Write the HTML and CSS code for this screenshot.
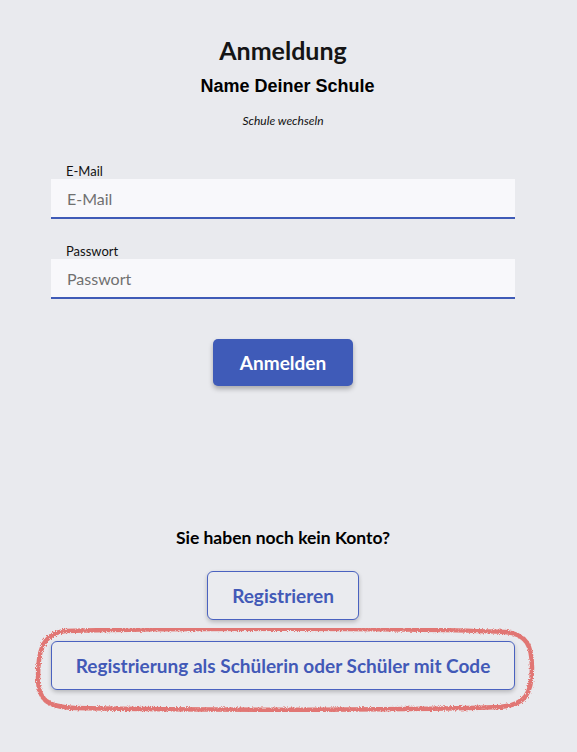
FILE: index.html
```html
<!DOCTYPE html>
<html lang="de">
<head>
<meta charset="utf-8">
<title>Anmeldung</title>
<link rel="stylesheet" href="styles.css">
</head>
<body>
<main class="page">
  <header class="head">
    <h1 class="title">Anmeldung</h1>
    <h2 class="school">Name Deiner Schule</h2>
    <a class="switch" href="#">Schule wechseln</a>
  </header>
  <form class="form">
    <label class="field">
      <span class="label">E-Mail</span>
      <input class="input" type="email" placeholder="E-Mail">
    </label>
    <label class="field">
      <span class="label">Passwort</span>
      <input class="input" type="password" placeholder="Passwort">
    </label>
    <div class="submit-row">
      <button class="btn-primary" type="button">Anmelden</button>
    </div>
  </form>
  <section class="register">
    <p class="question">Sie haben noch kein Konto?</p>
    <button class="btn-outline btn-small" type="button">Registrieren</button>
    <div class="code-wrap">
      <button class="btn-outline btn-wide" type="button">Registrierung als Schülerin oder Schüler mit Code</button>
      <svg class="scribble" viewBox="0 0 500 84" preserveAspectRatio="none" aria-hidden="true">
        <defs>
          <filter id="rough" x="-5%" y="-10%" width="110%" height="120%">
            <feTurbulence type="fractalNoise" baseFrequency="1.4" numOctaves="2" result="n"/>
            <feDisplacementMap in="SourceGraphic" in2="n" scale="4" result="d"/>
            <feGaussianBlur in="d" stdDeviation="0.45"/>
          </filter>
        </defs>
        <path d="M30 3 C 150 0, 380 0, 470 4 C 492 6, 497 18, 497 40 C 497 66, 490 77, 465 79 C 350 83, 150 82, 40 80 C 12 79, 3 72, 3 50 C 3 25, 6 6, 30 3 Z" fill="none" stroke="#e06a66" stroke-opacity="0.9" stroke-width="4.5" filter="url(#rough)"/>
      </svg>
    </div>
  </section>
</main>
</body>
</html>
```

FILE: styles.css
```css
* { box-sizing: border-box; }
html, body { margin: 0; padding: 0; }
body {
  background: #e9eaee;
  font-family: Lato, "Noto Sans", sans-serif;
  color: #111;
  width: 577px;
  height: 752px;
  overflow: hidden;
}
.page {
  width: 464px;
  margin-left: 51px;
  padding-top: 36px;
  display: flex;
  flex-direction: column;
}
.head {
  display: flex;
  flex-direction: column;
  align-items: center;
}
.title {
  margin: 0;
  font-size: 25px;
  font-weight: 700;
  line-height: 29px;
  color: #151515;
}
.school {
  margin: 11px 0 0;
  padding-left: 9px;
  font-family: "Liberation Sans", Arial, sans-serif;
  font-size: 18px;
  font-weight: 700;
  line-height: 21px;
  color: #000;
}
.switch {
  margin-top: 17px;
  font-size: 12px;
  font-style: italic;
  line-height: 14px;
  color: #111;
  text-decoration: none;
}
.form {
  margin-top: 35px;
  display: flex;
  flex-direction: column;
  gap: 24px;
}
.field {
  display: flex;
  flex-direction: column;
}
.label {
  padding-left: 15px;
  font-size: 13px;
  line-height: 16px;
  color: #111;
}
.input {
  height: 40px;
  border: 0;
  border-bottom: 2px solid #3f5bb7;
  background: #f8f8fb;
  padding: 0 16px;
  font-family: Lato, sans-serif;
  font-size: 16px;
  color: #222;
  outline: none;
}
.input::placeholder { color: #707070; }
.submit-row {
  display: flex;
  justify-content: center;
  margin-top: 16px;
}
.btn-primary {
  width: 140px;
  height: 47px;
  border: 0;
  border-radius: 5px;
  background: #3f5bb8;
  color: #fff;
  font-family: Lato, sans-serif;
  font-size: 19px;
  font-weight: 700;
  box-shadow: 0 3px 5px rgba(0,0,0,0.28);
}
.register {
  margin-top: 142px;
  display: flex;
  flex-direction: column;
  align-items: center;
}
.question {
  margin: 0;
  font-size: 17.5px;
  font-weight: 700;
  line-height: 20px;
  color: #000;
}
.btn-outline {
  height: 49px;
  border: 1px solid #4a62c0;
  border-radius: 6px;
  background: #eaebef;
  color: #4259b7;
  font-family: Lato, sans-serif;
  font-size: 19px;
  font-weight: 700;
  box-shadow: 0 2px 4px rgba(0,0,0,0.22);
}
.btn-small {
  margin-top: 23px;
  width: 152px;
}
.code-wrap {
  position: relative;
  margin-top: 21px;
  width: 464px;
}
.btn-wide {
  width: 464px;
}
.scribble {
  position: absolute;
  left: -16px;
  top: -13px;
  width: 500px;
  height: 84px;
  pointer-events: none;
}
```
